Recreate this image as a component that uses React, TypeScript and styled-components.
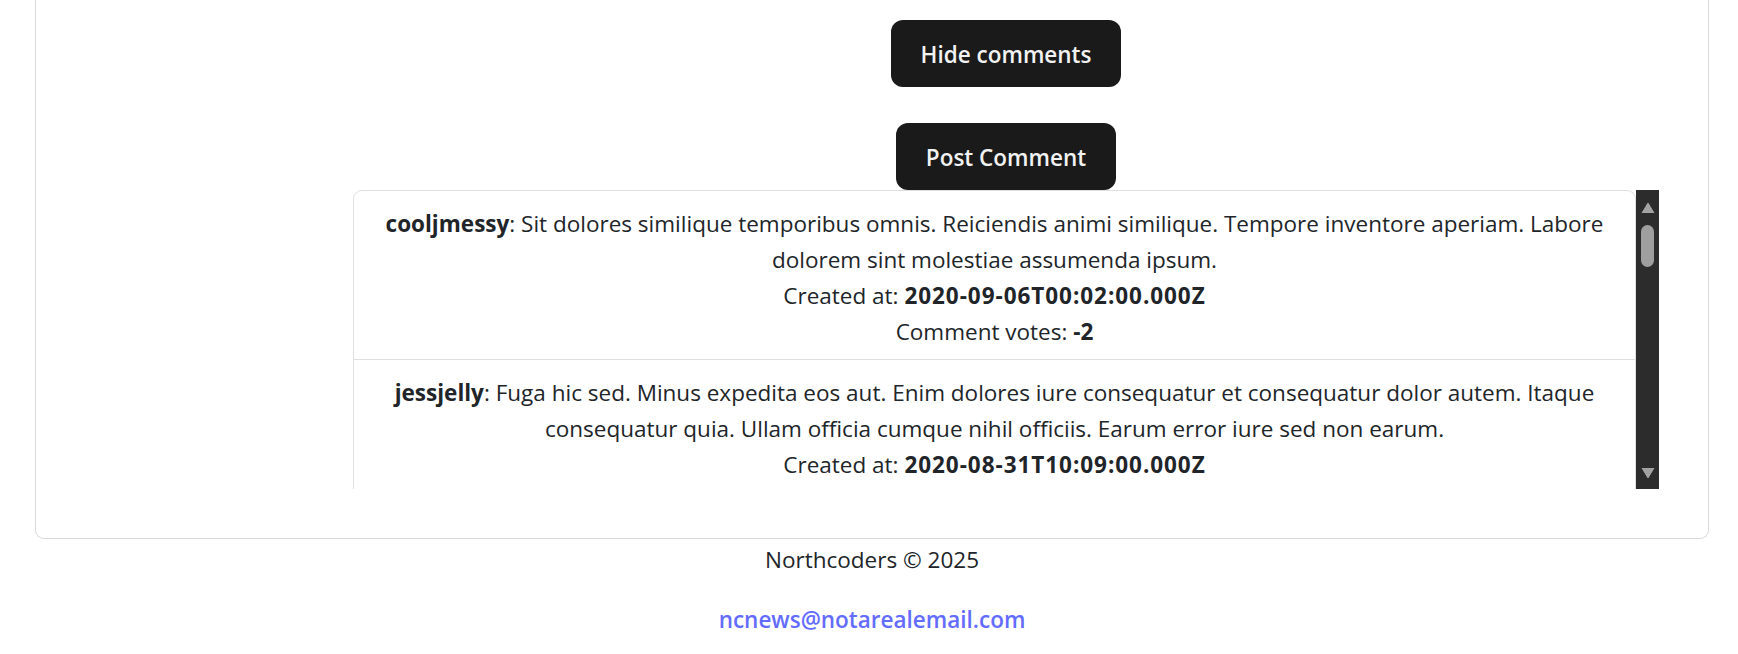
import React from "react";
import styled, { createGlobalStyle } from "styled-components";

const GlobalStyle = createGlobalStyle`
  html, body {
    margin: 0;
    padding: 0;
    background: #ffffff;
    overflow: hidden;
  }
  body {
    font-family: "Open Sans", "Noto Sans", sans-serif;
    font-size: 22.5px;
    line-height: 36px;
    color: #212529;
  }
`;

const Page = styled.div`
  width: 1674px;
  margin-left: 35px;
`;

const Card = styled.main`
  border: 1px solid #d9d9d9;
  border-top: none;
  border-radius: 0 0 9px 9px;
  padding: 20px 49px 49px 317px;
`;

const CommentsSection = styled.section`
  display: flex;
  flex-direction: column;
  align-items: center;
`;

const DarkButton = styled.button<{ $gapTop?: number }>`
  font-family: inherit;
  font-size: inherit;
  line-height: 36px;
  font-weight: 600;
  color: #f2f2f2;
  background: #1a1a1a;
  border: 1px solid transparent;
  border-radius: 12px;
  padding: 16px 28.8px 13px;
  margin-top: ${(p) => p.$gapTop ?? 0}px;
  cursor: pointer;
`;

const CommentsBox = styled.div`
  align-self: stretch;
  display: flex;
  height: 299px;
`;

const Viewport = styled.div`
  flex: 1;
  overflow: hidden;
`;

const List = styled.ul`
  list-style: none;
  margin: 0;
  padding: 0;
`;

const Item = styled.li`
  border: 1px solid #dfdfdf;
  padding: 14.5px 24px 9.5px;
  text-align: center;
  &:first-child {
    border-radius: 9px 9px 0 0;
  }
  & + & {
    border-top: none;
  }
`;

const Line = styled.p`
  margin: 0;
`;

const Strong = styled.b`
  font-weight: 700;
`;

const DateValue = styled.b`
  font-weight: 700;
  letter-spacing: 0.95px;
`;

const ScrollTrack = styled.div`
  width: 23px;
  background: #2c2c2c;
  display: flex;
  flex-direction: column;
  align-items: center;
  padding: 13px 0 11px;
  box-sizing: border-box;
`;

const Thumb = styled.div`
  width: 13px;
  height: 42px;
  border-radius: 6.5px;
  background: #9f9f9f;
  margin-top: 12px;
`;

const Spacer = styled.div`
  flex: 1;
`;

const Arrow = ({ down }: { down?: boolean }) => (
  <svg width="14" height="10" viewBox="0 0 14 10" style={{ display: "block" }}>
    <polygon
      points={down ? "1,0 13,0 7,10" : "7,0 13,10 1,10"}
      fill="#a3a3a3"
      stroke="#a3a3a3"
      strokeWidth="1"
      strokeLinejoin="round"
    />
  </svg>
);

const Footer = styled.footer`
  text-align: center;
  padding-top: 3px;
`;

const FooterText = styled.p`
  margin: 0 0 24px;
`;

const Mail = styled.a`
  color: #646cff;
  font-weight: 600;
  text-decoration: none;
`;

type Comment = {
  author: string;
  body: string;
  created: string;
  votes: number;
};

const comments: Comment[] = [
  {
    author: "cooljmessy",
    body:
      "Sit dolores similique temporibus omnis. Reiciendis animi similique. Tempore inventore aperiam. Labore dolorem sint molestiae assumenda ipsum.",
    created: "2020-09-06T00:02:00.000Z",
    votes: -2,
  },
  {
    author: "jessjelly",
    body:
      "Fuga hic sed. Minus expedita eos aut. Enim dolores iure consequatur et consequatur dolor autem. Itaque consequatur quia. Ullam officia cumque nihil officiis. Earum error iure sed non earum.",
    created: "2020-08-31T10:09:00.000Z",
    votes: 5,
  },
];

export default function App() {
  return (
    <Page>
      <GlobalStyle />
      <Card>
        <CommentsSection>
          <DarkButton>Hide comments</DarkButton>
          <DarkButton $gapTop={36}>Post Comment</DarkButton>
          <CommentsBox>
            <Viewport>
              <List>
                {comments.map((c) => (
                  <Item key={c.author + c.created}>
                    <Line>
                      <Strong>{c.author}</Strong>: {c.body}
                    </Line>
                    <Line>
                      Created at: <DateValue>{c.created}</DateValue>
                    </Line>
                    <Line>
                      Comment votes: <Strong>{c.votes}</Strong>
                    </Line>
                  </Item>
                ))}
              </List>
            </Viewport>
            <ScrollTrack>
              <Arrow />
              <Thumb />
              <Spacer />
              <Arrow down />
            </ScrollTrack>
          </CommentsBox>
        </CommentsSection>
      </Card>
      <Footer>
        <FooterText>Northcoders © 2025</FooterText>
        <Mail href="mailto:ncnews@notarealemail.com">ncnews@notarealemail.com</Mail>
      </Footer>
    </Page>
  );
}
